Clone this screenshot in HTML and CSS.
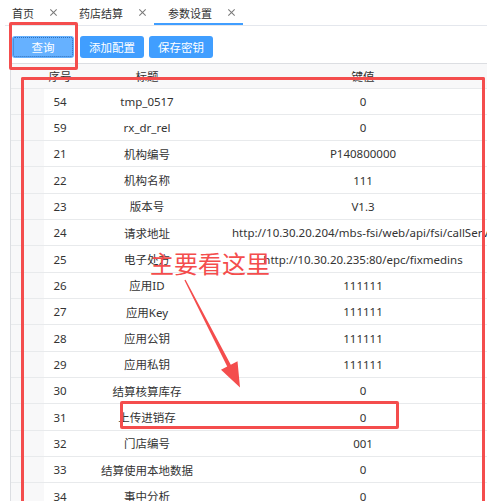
FILE: index.html
```html
<!DOCTYPE html>
<html>
<head>
    <meta charset="utf-8">
    <title>参数设置</title>
    <link rel="stylesheet" href="styles.css">
</head>
<body>
<div class="tabs">
    <div class="tab">首页<span class="close"></span></div>
    <div class="tab">药店结算<span class="close"></span></div>
    <div class="tab active">参数设置<span class="close"></span></div>
</div>

<div class="toolbar">
    <button class="btn focused">查询</button>
    <button class="btn">添加配置</button>
    <button class="btn">保存密钥</button>
</div>

<div class="table-wrap">
    <table class="grid">
        <colgroup>
            <col class="c-fix">
            <col class="c-no">
            <col class="c-title">
            <col class="c-value">
        </colgroup>
        <thead>
            <tr><th class="fix"></th><th>序号</th><th>标题</th><th>键值</th></tr>
        </thead>
        <tbody id="rows"></tbody>
    </table>
</div>

<!-- 标注 -->
<div class="mark mark-query"></div>
<div class="mark mark-table"></div>
<div class="mark mark-row"></div>
<div class="note">主要看这里</div>
<svg class="arrow" width="493" height="400" viewBox="0 0 493 400">
    <polygon points="184.4,280.3 227.2,366.6 221,369.8 240,387.5 237.5,361.2 230.8,364.8 185.6,279.7" fill="#f44d4d"/>
</svg>

<script>
    const configs = [
        [54, 'tmp_0517', '0'],
        [59, 'rx_dr_rel', '0'],
        [21, '机构编号', 'P140800000'],
        [22, '机构名称', '111'],
        [23, '版本号', 'V1.3'],
        [24, '请求地址', 'http://10.30.20.204/mbs-fsi/web/api/fsi/callService'],
        [25, '电子处方', 'http://10.30.20.235:80/epc/fixmedins'],
        [26, '应用ID', '111111'],
        [27, '应用Key', '111111'],
        [28, '应用公钥', '111111'],
        [29, '应用私钥', '111111'],
        [30, '结算核算库存', '0'],
        [31, '上传进销存', '0'],
        [32, '门店编号', '001'],
        [33, '结算使用本地数据', '0'],
        [34, '事中分析', '0']
    ];

    const rows = document.getElementById('rows');
    configs.forEach(item => {
        const tr = document.createElement('tr');
        tr.innerHTML = `
            <td class="fix"></td>
            <td>${item[0]}</td>
            <td>${item[1]}</td>
            <td>${item[2]}</td>
        `;
        rows.appendChild(tr);
    });
</script>
</body>
</html>
```

FILE: styles.css
```css
body {
    margin: 0;
    position: relative;
    height: 501px;
    overflow: hidden;
    background-color: #fff;
    color: #333;
    font-family: "Noto Sans", "Noto Sans CJK SC", sans-serif;
    font-size: 11.5px;
}

.tabs {
    display: flex;
    height: 25px;
    margin: 0 6px 0 5px;
    border-bottom: 1px solid #e4e7ed;
}

.tab {
    display: flex;
    align-items: center;
    padding: 0 8px 0 14px;
    font-size: 11px;
    color: #333;
}

.tab:first-child {
    padding-left: 7px;
}

.tab.active {
    box-shadow: inset 0 -2px 0 #409eff;
}

.close {
    position: relative;
    width: 7px;
    height: 7px;
    margin-left: 16px;
}

.close::before,
.close::after {
    content: "";
    position: absolute;
    left: 3px;
    top: -1px;
    width: 1px;
    height: 9px;
    background-color: #777;
    transform: rotate(45deg);
}

.close::after {
    transform: rotate(-45deg);
}

.toolbar {
    display: flex;
    margin: 10px 0 0 12px;
}

.btn {
    height: 22px;
    min-width: 62px;
    padding: 0 9px;
    margin-right: 5px;
    border: none;
    border-radius: 3px;
    background-color: #409eff;
    color: #fff;
    font-family: "Noto Sans", "Noto Sans CJK SC", sans-serif;
    font-size: 11.5px;
}

.btn.focused {
    margin-right: 6px;
    background-color: #66b1ff;
    outline: 1px dotted #2f6fb8;
    outline-offset: -2px;
}

.table-wrap {
    width: 476px;
    height: 437px;
    margin: 5px 0 0 10px;
    border-top: 1px solid #dcdee2;
    border-left: 1px solid #dcdee2;
    overflow: hidden;
}

.grid {
    width: 497px;
    table-layout: fixed;
    border-collapse: collapse;
}

.c-fix { width: 33px; }
.c-no { width: 32px; }
.c-title { width: 142px; }
.c-value { width: 290px; }

.grid th,
.grid td {
    padding: 0 14px;
    text-align: center;
    white-space: nowrap;
    overflow: hidden;
    border-bottom: 1px solid #e8eaec;
    font-weight: normal;
}

.grid td:nth-child(2),
.grid th:nth-child(2) {
    padding: 0;
}

.grid thead tr {
    height: 24px;
    background-color: #f8f8f9;
}

.grid tbody tr {
    height: 26.33px;
}

.grid .fix {
    padding: 0;
    background-color: #f8f8f9;
}

.mark {
    position: absolute;
    border: 3px solid #f44d4d;
    border-radius: 2px;
}

.mark-query {
    left: 9px;
    top: 22px;
    width: 63px;
    height: 42px;
}

/* 下边框在可视区外，这里只画三条边 */
.mark-table {
    left: 21px;
    top: 77px;
    width: 458px;
    height: 421px;
    border-bottom: none;
    border-radius: 2px 2px 0 0;
}

.mark-row {
    left: 120px;
    top: 401px;
    width: 273px;
    height: 22px;
}

.note {
    position: absolute;
    left: 150px;
    top: 251px;
    font-family: "Noto Sans CJK SC", sans-serif;
    font-size: 24px;
    line-height: 1;
    color: #f44d4d;
}

.arrow {
    position: absolute;
    left: 0;
    top: 0;
    pointer-events: none;
}
```
